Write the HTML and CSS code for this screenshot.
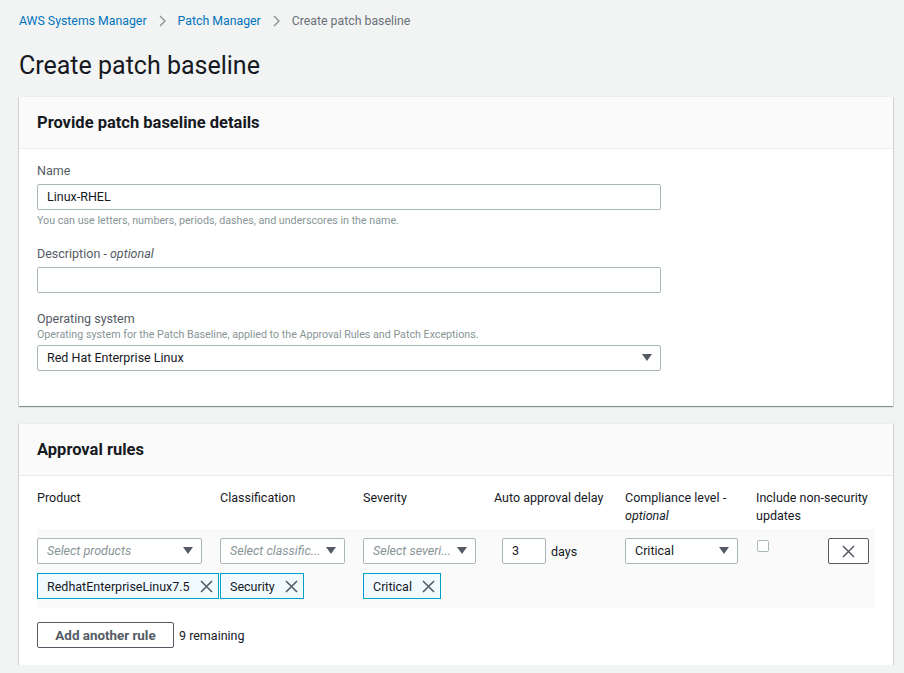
FILE: index.html
```html
<!DOCTYPE html>
<html lang="en">
<head>
<meta charset="utf-8">
<title>Create patch baseline</title>
<link rel="stylesheet" href="styles.css">
</head>
<body>
<div class="page">
  <nav class="crumbs">
    <a class="crumb-link">AWS Systems Manager</a>
    <svg class="chev" width="9" height="12" viewBox="0 0 9 12"><path d="M2 1l5 5-5 5" fill="none" stroke="#879596" stroke-width="1.4"/></svg>
    <a class="crumb-link">Patch Manager</a>
    <svg class="chev" width="9" height="12" viewBox="0 0 9 12"><path d="M2 1l5 5-5 5" fill="none" stroke="#879596" stroke-width="1.4"/></svg>
    <span class="crumb-current">Create patch baseline</span>
  </nav>
  <h1 class="title">Create patch baseline</h1>

  <section class="panel">
    <div class="panel-head">Provide patch baseline details</div>
    <div class="panel-body details">
      <div class="field">
        <div class="label">Name</div>
        <div class="input">Linux-RHEL</div>
        <div class="hint">You can use letters, numbers, periods, dashes, and underscores in the name.</div>
      </div>
      <div class="field field-gap18">
        <div class="label">Description - <i>optional</i></div>
        <div class="input"></div>
      </div>
      <div class="field field-gap17">
        <div class="label">Operating system</div>
        <div class="hint hint-top">Operating system for the Patch Baseline, applied to the Approval Rules and Patch Exceptions.</div>
        <div class="input select"><span>Red Hat Enterprise Linux</span><svg class="caret" width="10" height="8" viewBox="0 0 10 8"><path d="M0 0h10L5 7z" fill="#545b64"/></svg></div>
      </div>
    </div>
  </section>

  <section class="panel panel2">
    <div class="panel-head">Approval rules</div>
    <div class="panel-body rules">
      <div class="grid heads">
        <div>Product</div>
        <div>Classification</div>
        <div>Severity</div>
        <div>Auto approval delay</div>
        <div>Compliance level - <i>optional</i></div>
        <div class="head-include">Include non-security updates</div>
      </div>
      <div class="rule-row">
        <div class="grid">
          <div class="cell">
            <div class="input select sm w165"><span class="ph">Select products</span><svg class="caret" width="10" height="8" viewBox="0 0 10 8"><path d="M0 0h10L5 7z" fill="#545b64"/></svg></div>
            <div class="token"><span>RedhatEnterpriseLinux7.5</span><svg width="13" height="13" viewBox="0 0 13 13"><path d="M1 1l11 11M12 1L1 12" stroke="#545b64" stroke-width="1.6"/></svg></div>
          </div>
          <div class="cell">
            <div class="input select sm w125"><span class="ph">Select classific...</span><svg class="caret" width="10" height="8" viewBox="0 0 10 8"><path d="M0 0h10L5 7z" fill="#545b64"/></svg></div>
            <div class="token"><span>Security</span><svg width="13" height="13" viewBox="0 0 13 13"><path d="M1 1l11 11M12 1L1 12" stroke="#545b64" stroke-width="1.6"/></svg></div>
          </div>
          <div class="cell">
            <div class="input select sm w113"><span class="ph">Select severi...</span><svg class="caret" width="10" height="8" viewBox="0 0 10 8"><path d="M0 0h10L5 7z" fill="#545b64"/></svg></div>
            <div class="token"><span>Critical</span><svg width="13" height="13" viewBox="0 0 13 13"><path d="M1 1l11 11M12 1L1 12" stroke="#545b64" stroke-width="1.6"/></svg></div>
          </div>
          <div class="cell delay">
            <div class="input num">3</div>
            <span class="days">days</span>
          </div>
          <div class="cell">
            <div class="input select w113 dark"><span>Critical</span><svg class="caret" width="10" height="8" viewBox="0 0 10 8"><path d="M0 0h10L5 7z" fill="#545b64"/></svg></div>
          </div>
          <div class="cell">
            <span class="checkbox"></span>
          </div>
          <div class="cell">
            <div class="remove"><svg width="13" height="13" viewBox="0 0 13 13"><path d="M1 1l11 11M12 1L1 12" stroke="#545b64" stroke-width="1.5"/></svg></div>
          </div>
        </div>
      </div>
      <div class="actions">
        <div class="btn">Add another rule</div>
        <span class="remaining">9 remaining</span>
      </div>
    </div>
  </section>
</div>
</body>
</html>
```

FILE: styles.css
```css
* { box-sizing: border-box; }
html, body { margin: 0; padding: 0; }
body {
  background: #f2f3f3;
  font-family: Roboto, "Liberation Sans", sans-serif;
  color: #16191f;
  font-size: 12.5px;
}
.page {
  padding: 12px 11px 0 19px;
}
.crumbs {
  display: flex;
  align-items: center;
  height: 18px;
  font-size: 12.3px;
  line-height: 18px;
}
.crumb-link { color: #0073bb; }
.crumb-current { color: #687078; }
.chev { margin: 0 11px 0 11px; }
.title {
  margin: 20px 0 15px;
  font-size: 25px;
  font-weight: 400;
  line-height: 32px;
  height: 32px;
  color: #16191f;
}
.panel {
  background: #fff;
  box-shadow: 0 1px 1px 0 rgba(0, 28, 36, 0.45), 1px 0 1px 0 rgba(0, 28, 36, 0.08), -1px 0 1px 0 rgba(0, 28, 36, 0.08);
}
.panel2 { margin-top: 18px; }
.panel-head {
  height: 52px;
  background: #fafafa;
  border-bottom: 1px solid #eaeded;
  padding: 0 18px;
  display: flex;
  align-items: center;
  font-size: 16.5px;
  font-weight: 700;
  color: #16191f;
}
.panel-body { padding: 13px 18px 0; }
.details { padding-bottom: 35px; }
.field { width: 624px; }
.field-gap18 { margin-top: 18px; }
.field-gap17 { margin-top: 17px; }
.label {
  color: #545b64;
  line-height: 18px;
  height: 18px;
  margin-bottom: 4px;
}
.label i { font-style: italic; }
.hint {
  font-size: 10.7px;
  color: #879596;
  line-height: 12px;
  margin-top: 5px;
}
.hint.hint-top { margin-top: -3px; margin-bottom: 4px; }
.input {
  height: 26px;
  border: 1px solid #aab7b8;
  border-radius: 2px;
  background: #fff;
  padding: 0 9px;
  display: flex;
  align-items: center;
  color: #16191f;
  line-height: 18px;
}
.select { justify-content: space-between; }
.select .caret { flex: none; margin-right: -1px; }
.select span { white-space: nowrap; overflow: hidden; }
.ph { color: #879596; font-style: italic; }
.w165 { width: 165px; }
.w125 { width: 125px; }
.w113 { width: 113px; }
.sm .caret { margin-left: 4px; }

.rules { padding-bottom: 17px; }
.grid {
  display: grid;
  grid-template-columns: 178px 138px 126px 126px 126px 67px 41px;
  column-gap: 5px;
}
.heads {
  line-height: 18px;
  color: #16191f;
  padding-bottom: 4px;
}
.heads > div { min-height: 36px; }
.head-include { grid-column: 6 / span 2; width: 122px; }
.rule-row {
  background: #fafafa;
  padding: 9px 7px 9px 0;
}
.cell { display: flex; flex-direction: column; align-items: flex-start; gap: 9px; }
.token {
  height: 26px;
  border: 1px solid #00a1c9;
  background: #f1faff;
  display: flex;
  align-items: center;
  padding: 0 5px 0 9px;
  gap: 10px;
  white-space: nowrap;
  color: #16191f;
}
.token svg { flex: none; }
.delay { flex-direction: row; align-items: center; gap: 5px; padding-left: 8px; height: 26px; }
.num { width: 44px; padding: 0 9px; }
.days { color: #16191f; }
.checkbox {
  display: block;
  width: 12px;
  height: 12px;
  border: 1px solid #aab7b8;
  border-radius: 2px;
  background: #fff;
  margin: 2px 0 0 1px;
}
.remove {
  width: 41px;
  height: 26px;
  border: 1px solid #545b64;
  border-radius: 2px;
  background: #fff;
  display: flex;
  align-items: center;
  justify-content: center;
}
.actions {
  display: flex;
  align-items: center;
  margin-top: 14px;
  gap: 5px;
}
.btn {
  width: 137px;
  height: 26px;
  border: 1px solid #545b64;
  border-radius: 2px;
  background: #fff;
  color: #545b64;
  font-size: 13.4px;
  font-weight: 700;
  display: flex;
  align-items: center;
  justify-content: center;
}
.remaining { color: #16191f; }
```
